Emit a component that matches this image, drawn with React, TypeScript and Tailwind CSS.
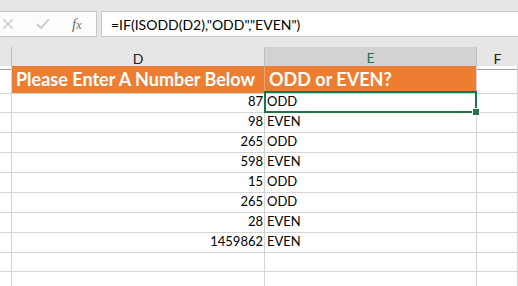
import React from "react";

const rows: [number | null, string][] = [
  [87, "ODD"],
  [98, "EVEN"],
  [265, "ODD"],
  [598, "EVEN"],
  [15, "ODD"],
  [265, "ODD"],
  [28, "EVEN"],
  [1459862, "EVEN"],
  [null, ""],
  [null, ""],
];

const cell = "border-r border-b border-[#d4d4d4]";

function App() {
  return (
    <div
      className="w-[518px] h-[286px] overflow-hidden bg-white text-black"
      style={{ fontFamily: "Lato, 'Open Sans', sans-serif" }}
    >
      {/* formula bar */}
      <div className="h-[47px] bg-[#e6e6e6] pt-[11px] flex gap-[4px]">
        <div className="w-[97px] h-[26px] bg-[#fdfdfd] border border-l-0 border-[#c6c6c6] flex items-center text-[#bdbdbd]">
          <svg width="12" height="12" viewBox="0 0 12 12" className="ml-[2px]">
            <path d="M1 1 L11 11 M11 1 L1 11" stroke="#c8c8c8" strokeWidth="1.4" />
          </svg>
          <svg width="14" height="12" viewBox="0 0 14 12" className="ml-[22px]">
            <path d="M1 6 L5 10 L13 1" stroke="#c8c8c8" strokeWidth="1.8" fill="none" />
          </svg>
          <span
            className="ml-[22px] text-[15px] italic text-[#6b6b6b]"
            style={{ fontFamily: "'Liberation Serif', serif" }}
          >
            f<span className="text-[12px]">x</span>
          </span>
        </div>
        <div className="flex-1 h-[26px] bg-white border border-r-0 border-[#c6c6c6] flex items-center pl-[9px] text-[14px]">
          =IF(ISODD(D2),"ODD","EVEN")
        </div>
      </div>

      {/* column headers */}
      <div className="grid grid-cols-[12px_253px_212px_1fr] h-[19px] bg-[#e6e6e6] text-[14px] text-[#222]">
        <div className="border-r border-b border-r-[#bdbdbd] border-b-[#9e9e9e]" />
        <div className="border-r border-b border-r-[#bdbdbd] border-b-[#9e9e9e] flex items-center justify-center">
          D
        </div>
        <div className="bg-[#d2d2d2] border-r border-r-[#bdbdbd] border-b-2 border-b-[#217346] flex items-center justify-center text-[#217346]">
          E
        </div>
        <div className="border-b border-b-[#9e9e9e] flex items-center justify-center">F</div>
      </div>

      {/* header row */}
      <div className="grid grid-cols-[12px_253px_212px_1fr] h-[26px] text-[18px] font-bold text-white">
        <div className={cell} />
        <div className="bg-[#ed7d31] border-r border-b border-r-[#e9a577] border-b-[#d4d4d4] flex items-center pl-[4px]">
          Please Enter A Number Below
        </div>
        <div className="bg-[#ed7d31] border-r border-b border-[#d4d4d4] flex items-center pl-[4px]">
          ODD or EVEN?
        </div>
        <div className={cell} />
      </div>

      {/* data rows */}
      {rows.map(([n, s], i) => (
        <div key={i} className="grid grid-cols-[12px_253px_212px_1fr] h-[20px] text-[13px]">
          <div className={cell} />
          <div className={`${cell} flex items-center justify-end pr-[1px]`}>{n ?? ""}</div>
          <div className={`${cell} relative flex items-center pl-[2px]`}>
            {s}
            {i === 0 && (
              <>
                <div className="absolute z-10 -left-[1px] -top-[1px] w-[213px] h-[22px] border-2 border-[#217346]" />
                <div className="absolute z-20 left-[207px] top-[16px] w-[8px] h-[8px] bg-[#217346] border border-white" />
              </>
            )}
          </div>
          <div className={cell} />
        </div>
      ))}
    </div>
  );
}

export default App;
